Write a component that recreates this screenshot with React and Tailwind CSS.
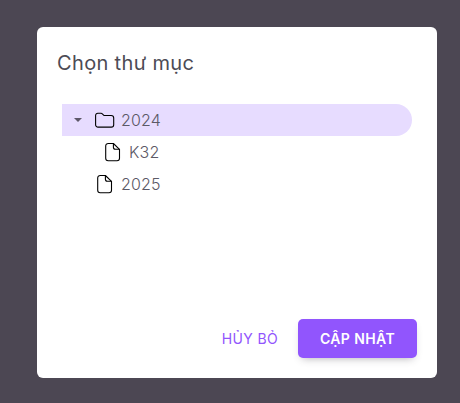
function FolderIcon() {
  return (
    <svg width="20" height="16" viewBox="0 0 20 16" fill="none" stroke="#000" strokeWidth="1.1" strokeLinejoin="round" className="shrink-0">
      <path d="M.6 3.500A2.200 2.200 0 0 1 2.800 1.300h3.300c.5 0 .900.2 1.200.5l1.300 1.300c.3.300.600.4 1 .4h6.600a2.500 2.500 0 0 1 2.500 2.500v6.700a2.400 2.400 0 0 1-2.400 2.400H3a2.400 2.400 0 0 1-2.400-2.400z" />
    </svg>
  );
}

function FileIcon() {
  return (
    <svg width="16" height="20" viewBox="0 0 16 20" fill="none" stroke="#000" strokeWidth="1.1" strokeLinejoin="round" className="shrink-0">
      <path d="M3.200 1.500h5.200L14.500 7.300v8.900a2.500 2.500 0 0 1-2.500 2.500H3.200a2.500 2.500 0 0 1-2.500-2.500V4a2.500 2.500 0 0 1 2.500-2.500z" />
      <path d="M8.400 1.500v3.800c0 1.200.800 2 2 2h4.100" />
    </svg>
  );
}

export default function App() {
  return (
    <div className="h-[403px] w-[460px] bg-[#4c4753] pl-[37px] pt-[27px] font-['Inter',sans-serif] text-[#4c4b55]">
      <div className="flex h-[351px] w-[400px] flex-col rounded-md bg-white">
        <h2 className="px-5 pt-5 text-xl leading-8 tracking-[0.35px]">Chọn thư mục</h2>
        <div className="mt-[25px] flex-1 px-[25px] text-base font-light leading-8 tracking-[0.2px] text-[#5c5966]">
          <div className="flex h-8 items-center rounded-r-full bg-[#e7dcff] pl-3">
            <svg width="8" height="4" viewBox="0 0 8 4" className="mr-[13px] shrink-0">
              <path d="M0 0h8L4 4z" fill="#5d5768" />
            </svg>
            <FolderIcon />
            <span className="ml-1.5">2024</span>
          </div>
          <div className="flex h-8 items-center pl-[43px]">
            <FileIcon />
            <span className="ml-2">K32</span>
          </div>
          <div className="flex h-8 items-center pl-[35px]">
            <FileIcon />
            <span className="ml-2">2025</span>
          </div>
        </div>
        <div className="flex items-center justify-end px-5 pb-5 text-sm">
          <button className="mr-5 font-normal tracking-[0.35px] text-[#9155fd]">HỦY BỎ</button>
          <button className="h-[39px] w-[119px] rounded-[5px] bg-[#9155fd] font-semibold tracking-[0.4px] text-white shadow-[0_4px_8px_-4px_rgba(58,53,65,0.42)]">CẬP NHẬT</button>
        </div>
      </div>
    </div>
  );
}
